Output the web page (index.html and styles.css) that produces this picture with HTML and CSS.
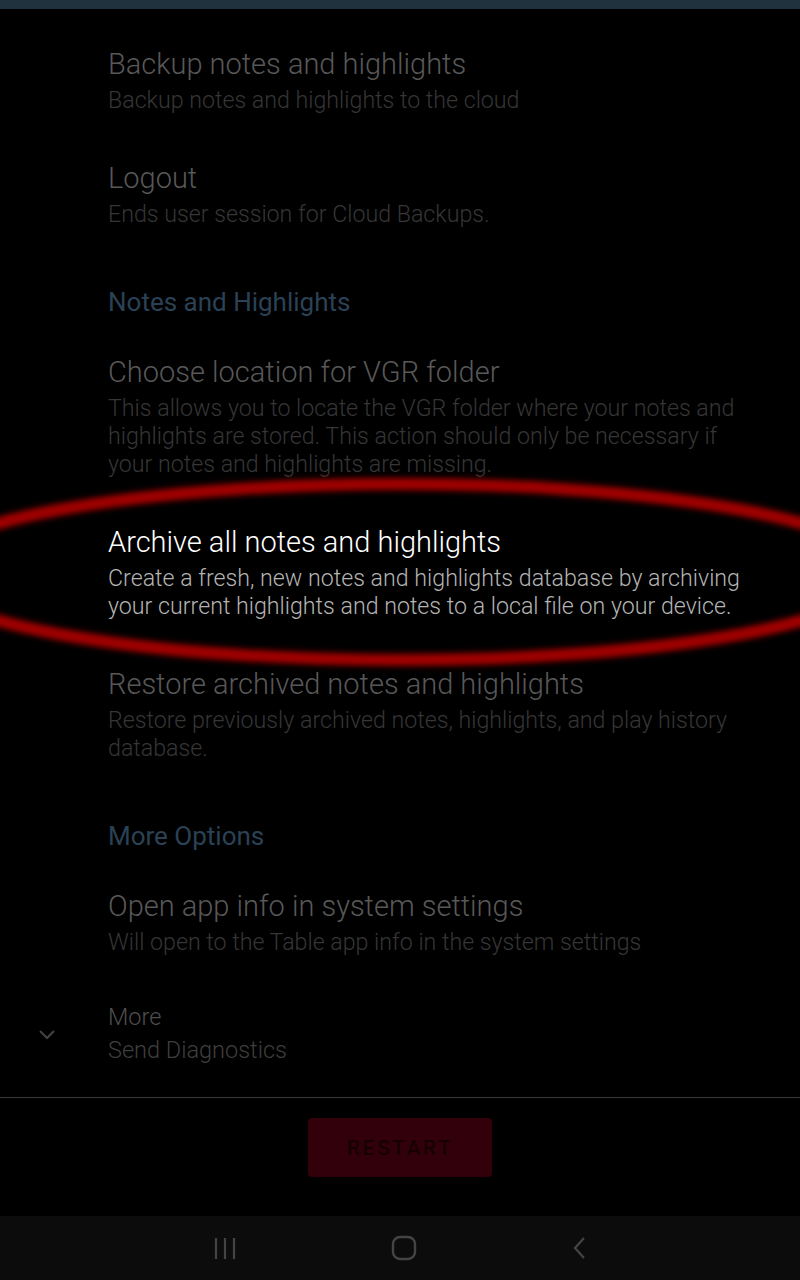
FILE: index.html
```html
<!DOCTYPE html>
<html>
<head>
	<title>Settings</title>
	<link rel="stylesheet" href="styles.css">
</head>
<body>
	<div class="screen">
		<div class="topBar"></div>

		<div class="prefList">
			<div class="pref dim">
				<div class="prefTitle">Backup notes and highlights</div>
				<div class="prefSummary">Backup notes and highlights to the cloud</div>
			</div>
			<div class="pref dim">
				<div class="prefTitle">Logout</div>
				<div class="prefSummary">Ends user session for Cloud Backups.</div>
			</div>

			<div class="category">Notes and Highlights</div>
			<div class="pref dim">
				<div class="prefTitle">Choose location for VGR folder</div>
				<div class="prefSummary">This allows you to locate the VGR folder where your notes and highlights are stored. This action should only be necessary if your notes and highlights are missing.</div>
			</div>
			<div class="pref active">
				<div class="prefTitle">Archive all notes and highlights</div>
				<div class="prefSummary">Create a fresh, new notes and highlights database by archiving your current highlights and notes to a local file on your device.</div>
			</div>
			<div class="pref dim">
				<div class="prefTitle">Restore archived notes and highlights</div>
				<div class="prefSummary">Restore previously archived notes, highlights, and play history database.</div>
			</div>

			<div class="category">More Options</div>
			<div class="pref dim">
				<div class="prefTitle">Open app info in system settings</div>
				<div class="prefSummary">Will open to the Table app info in the system settings</div>
			</div>
			<div class="pref more">
				<div class="moreIcon">
					<svg width="20" height="12" viewBox="0 0 20 12"><path d="M3 2 L10 9 L17 2" fill="none" stroke="#444" stroke-width="2"/></svg>
				</div>
				<div>
					<div class="prefTitle">More</div>
					<div class="prefSummary">Send Diagnostics</div>
				</div>
			</div>

			<!-- highlight ring drawn over the list -->
			<svg class="ring" width="800" height="260" viewBox="0 0 800 260">
				<defs>
					<filter id="glow" x="-20%" y="-50%" width="140%" height="200%">
						<feGaussianBlur stdDeviation="3"/>
					</filter>
				</defs>
				<ellipse cx="400" cy="130" rx="482" ry="88" fill="none" stroke="#8a0000" stroke-width="12" filter="url(#glow)"/>
				<ellipse cx="400" cy="130" rx="482" ry="88" fill="none" stroke="#b80000" stroke-width="4" filter="url(#glow)"/>
			</svg>
		</div>

		<div class="footer">
			<div class="restartBtn">RESTART</div>
		</div>

		<div class="navBar">
			<svg width="24" height="24" viewBox="0 0 24 24"><path d="M3 2 V23 M12 2 V23 M21 2 V23" stroke="#444" stroke-width="2.2"/></svg>
			<svg width="26" height="26" viewBox="0 0 26 26"><rect x="2" y="2" width="22" height="22" rx="7" fill="none" stroke="#444" stroke-width="2.4"/></svg>
			<svg width="16" height="24" viewBox="0 0 16 24"><path d="M13 2 L4 12 L13 22" fill="none" stroke="#444" stroke-width="2.2"/></svg>
		</div>
	</div>
</body>
</html>
```

FILE: styles.css
```css
body{
	margin:0;
	background:#000;
	font-family:Roboto, "Noto Sans", sans-serif;
}
.screen{
	width:800px;
	height:1280px;
	display:flex;
	flex-direction:column;
	background:#000;
	overflow:hidden;
}
.topBar{
	height:9px;
	background:#21323f;
}
.prefList{
	flex:1;
	position:relative;
	padding-top:14px;
	overflow:hidden;
}
.pref{
	padding:23px 40px 23px 108px;
}
.prefTitle{
	font-size:29px;
	font-weight:300;
	line-height:36px;
	color:#585858;
}
.prefSummary{
	margin-top:4px;
	font-size:23.2px;
	font-weight:300;
	line-height:28px;
	color:#363636;
}
.active .prefTitle{
	color:#ffffff;
}
.active .prefSummary{
	color:#b4b4b4;
}
.category{
	padding:36px 0 14px 108px;
	font-size:26px;
	line-height:30px;
	color:#2b4256;
}
.more{
	display:flex;
	align-items:center;
	padding-left:37px;
}
.moreIcon{
	width:71px;
	padding-top:4px;
}
.more .prefTitle{
	font-size:23.5px;
	line-height:30px;
	color:#4e4e4e;
}
.more .prefSummary{
	margin-top:3px;
	font-size:23.5px;
	line-height:30px;
	color:#3e3e3e;
}
.ring{
	position:absolute;
	left:0;
	top:433px;
	pointer-events:none;
}
.footer{
	height:119px;
	border-top:1px solid #3a3a3a;
	display:flex;
	justify-content:center;
	padding-top:20px;
	box-sizing:border-box;
}
.restartBtn{
	width:184px;
	height:59px;
	border-radius:4px;
	background:#31000a;
	color:#170004;
	font-size:21px;
	font-weight:500;
	letter-spacing:2.5px;
	display:flex;
	align-items:center;
	justify-content:center;
}
.navBar{
	height:64px;
	background:#0c0c0c;
	display:flex;
	align-items:center;
	justify-content:center;
	gap:154px;
}
```
